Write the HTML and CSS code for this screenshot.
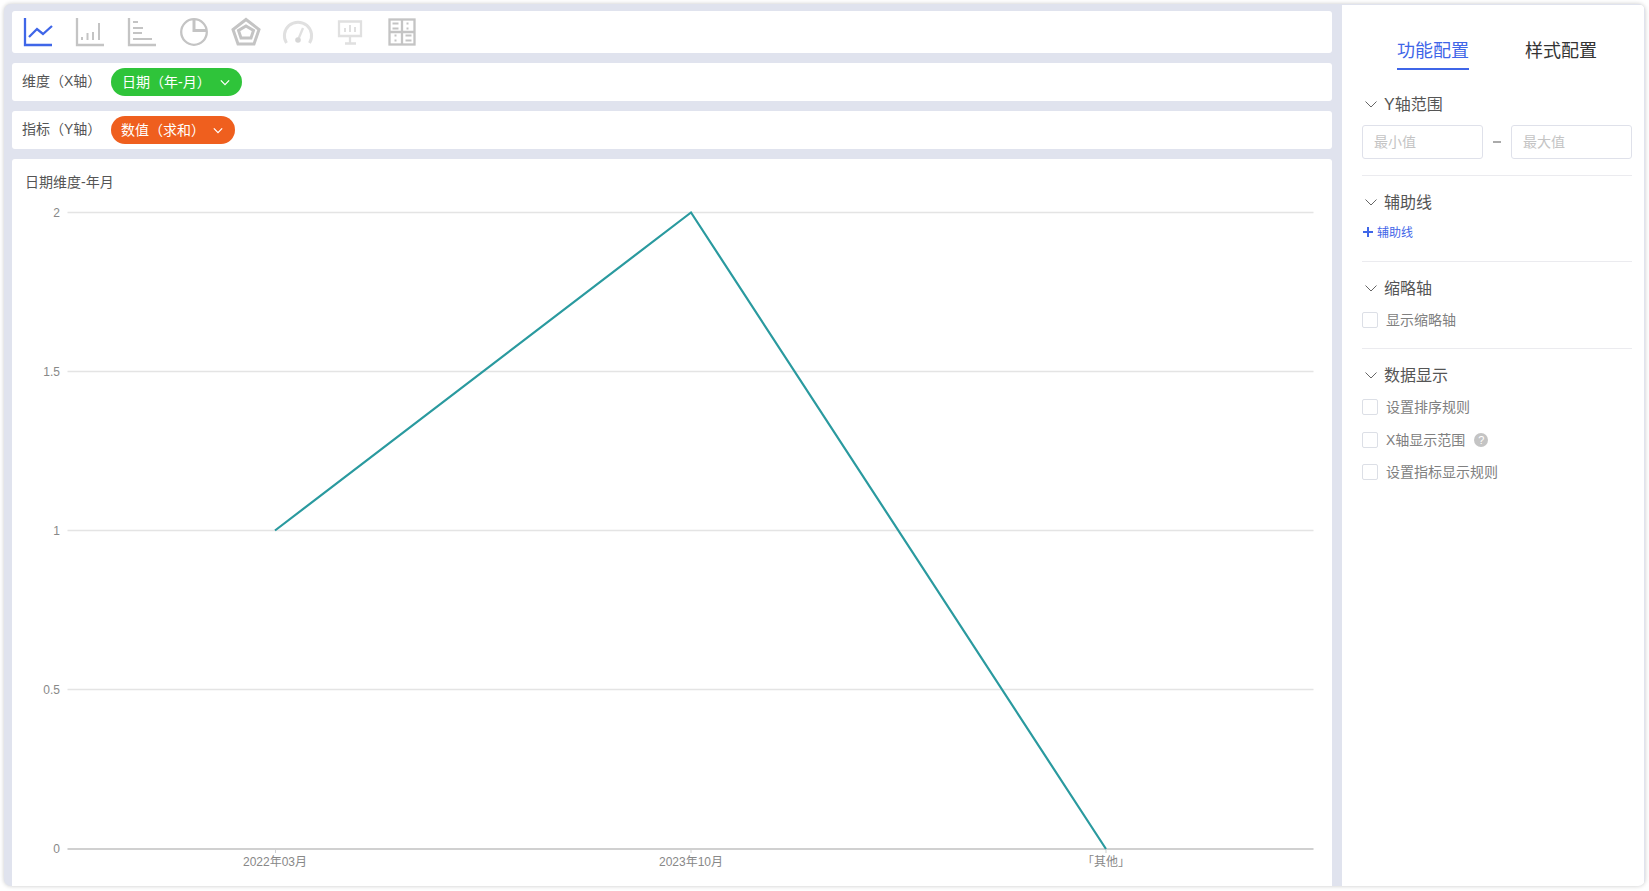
FILE: index.html
```html
<!DOCTYPE html>
<html lang="zh-CN">
<head>
<meta charset="utf-8">
<title>图表配置</title>
<link rel="stylesheet" href="styles.css">
</head>
<body>
<div class="window">
  <main class="main">
    <div class="card toolbar">
      <svg class="ico" viewBox="0 0 28 28"><g class="s-blue"><path d="M1 0V27H28"/><path d="M5 19L13 11L19 16L28 8"/></g></svg>
      <svg class="ico" viewBox="0 0 28 28"><g class="s-gray"><path d="M1 0V27H28"/><path class="thin" d="M6 22V19M11.500 22V15M17 22V14M23 22V5"/></g></svg>
      <svg class="ico" viewBox="0 0 28 28"><g class="s-gray"><path d="M1 0V27H28"/><path class="thin" d="M5 4H10M5 10H15M5 15H14M5 21H24"/></g></svg>
      <svg class="ico" viewBox="0 0 28 28"><g class="s-gray"><circle cx="14" cy="14" r="12.800"/><path class="bold" d="M14 1V12.500H27"/></g></svg>
      <svg class="ico" viewBox="0 0 28 28"><g class="s-gray"><path class="bold" d="M14 1.500L27 11.500L22 26H6L1 11.500Z"/><path class="bold" d="M14 8L21.500 12.500L19 20H9L6.500 12.500Z"/></g></svg>
      <svg class="ico" viewBox="0 0 28 28"><g class="s-light"><path class="bold" d="M2.500 25A13.600 13.600 0 1 1 25.500 25"/><path d="M14 22L19 10"/><circle class="dot" cx="14" cy="22" r="2.800"/></g></svg>
      <svg class="ico" viewBox="0 0 28 28"><g class="s-light"><path d="M3 3.500H25V18H3Z"/><path d="M14 18V25M9 25.500H20"/><path class="thin" d="M9 14V10M14 14V7M19 14V9"/></g></svg>
      <svg class="ico" viewBox="0 0 28 28"><g class="s-gray"><rect x="1.500" y="1.500" width="25" height="25"/><path d="M14 1V27M1 14H27"/><path class="thin" d="M4.500 5.500H10.500M4.500 10.500H10.500M17.500 17.500H23.500M17.500 22.500H23.500M19.500 4.500V6.500M19.500 9.500V11.500M7.500 16.500V18.500M7.500 21.500V23.500"/></g></svg>
    </div>
    <div class="card field">
      <span class="field-label">维度（X轴）</span>
      <span class="pill pill-green"><span class="lbl">日期（年-月）</span><svg class="chev" viewBox="0 0 12 8"><path d="M1 1.500L6 6.500L11 1.500"/></svg></span>
    </div>
    <div class="card field">
      <span class="field-label">指标（Y轴）</span>
      <span class="pill pill-orange"><span class="lbl">数值（求和）</span><svg class="chev" viewBox="0 0 12 8"><path d="M1 1.500L6 6.500L11 1.500"/></svg></span>
    </div>
    <div class="card chart">
      <div class="chart-title">日期维度-年月</div>
      <svg class="plot" viewBox="12 191 1320 695" preserveAspectRatio="none">
        <g class="grid">
          <path d="M67.500 212.500H1313.500"/>
          <path d="M67.500 371.500H1313.500"/>
          <path d="M67.500 530.500H1313.500"/>
          <path d="M67.500 689.500H1313.500"/>
        </g>
        <path class="base" d="M67.500 849H1313.500"/>
        <path class="tick" d="M275.500 849V853M691 849V853M1106 849V853"/>
        <g class="y-labels">
          <text x="60" y="217">2</text>
          <text x="60" y="376">1.5</text>
          <text x="60" y="535">1</text>
          <text x="60" y="694">0.5</text>
          <text x="60" y="853">0</text>
        </g>
        <g class="x-labels">
          <text x="275" y="866">2022年03月</text>
          <text x="691" y="866">2023年10月</text>
          <text x="1106" y="866">「其他」</text>
        </g>
        <path class="series" d="M275 530.500L691 212.500L1106 849"/>
      </svg>
    </div>
  </main>
  <aside class="panel">
    <div class="tabs">
      <span class="tab tab-active">功能配置</span>
      <span class="tab">样式配置</span>
    </div>
    <section class="sec sec-range">
      <div class="sec-head"><svg class="sec-chev" viewBox="0 0 12 7"><path d="M.5 .5L6 6L11.500 .5"/></svg><span class="lbl">Y轴范围</span></div>
      <div class="range">
        <div class="input">最小值</div>
        <span class="dash"></span>
        <div class="input">最大值</div>
      </div>
    </section>
    <section class="sec sec-guide">
      <div class="sec-head"><svg class="sec-chev" viewBox="0 0 12 7"><path d="M.5 .5L6 6L11.500 .5"/></svg><span class="lbl">辅助线</span></div>
      <div class="add"><svg class="plus" viewBox="0 0 10 10"><path d="M5 0V10M0 5H10"/></svg><span class="lbl">辅助线</span></div>
    </section>
    <section class="sec sec-thumb">
      <div class="sec-head"><svg class="sec-chev" viewBox="0 0 12 7"><path d="M.5 .5L6 6L11.500 .5"/></svg><span class="lbl">缩略轴</span></div>
      <label class="check"><span class="box"></span><span class="lbl">显示缩略轴</span></label>
    </section>
    <section class="sec sec-last">
      <div class="sec-head"><svg class="sec-chev" viewBox="0 0 12 7"><path d="M.5 .5L6 6L11.500 .5"/></svg><span class="lbl">数据显示</span></div>
      <label class="check"><span class="box"></span><span class="lbl">设置排序规则</span></label>
      <label class="check"><span class="box"></span><span class="lbl">X轴显示范围</span><span class="help">?</span></label>
      <label class="check"><span class="box"></span><span class="lbl">设置指标显示规则</span></label>
    </section>
  </aside>
</div>
</body>
</html>
```
FILE: styles.css
```css
* { box-sizing: border-box; }
html, body { height: 100%; }
body {
  margin: 0;
  padding: 4px 4px 5px 4px;
  background: #fff;
  font-family: "Liberation Sans", "Noto Sans CJK SC", sans-serif;
  overflow: hidden;
}
.window {
  display: flex;
  height: 100%;
  background: #e0e3ee;
  border-radius: 7px;
  overflow: hidden;
  box-shadow: 0 0 4px rgba(0, 0, 0, .22);
}
.main {
  width: 1338px;
  flex: none;
  display: flex;
  flex-direction: column;
  gap: 10px;
  padding: 7px 10px 0 8px;
}
.card { background: #fff; border-radius: 3px; flex: none; }
.toolbar {
  height: 42px;
  display: flex;
  align-items: flex-start;
  gap: 24px;
  padding: 7px 0 0 12px;
}
.ico { width: 28px; height: 28px; flex: none; overflow: visible; }
.ico g { fill: none; stroke-width: 2.300; }
.ico .thin { stroke-width: 2; }
.ico .bold { stroke-width: 3; }
.s-blue { stroke: #3f66e8; }
.s-gray { stroke: #c4c4c4; }
.s-light { stroke: #e0e0e0; }
.ico .dot { fill: #d6d6d6; stroke: none; }
.lbl { margin-bottom: 2px; }
.field {
  height: 38px;
  display: flex;
  align-items: center;
  padding-left: 10px;
}
.field-label { width: 89px; font-size: 14px; line-height: 18px; padding-bottom: 3px; color: #555; flex: none; }
.pill {
  height: 28px;
  display: flex;
  align-items: center;
  border-radius: 14px;
  color: #fff;
  font-size: 14px;
  flex: none;
}
.pill .lbl { margin-bottom: 3px; }
.pill-green { width: 131px; background: #2fc43a; padding-left: 11px; }
.pill-orange { width: 124px; background: #ef5f1e; padding-left: 10px; }
.chev { width: 10px; height: 7px; margin-left: 9px; fill: none; stroke: #fff; stroke-width: 1.500; }
.pill-orange .chev { margin-left: 8px; }
.chart { flex: 1; min-height: 0; display: flex; flex-direction: column; border-radius: 3px 3px 0 0; }
.chart-title { height: 32px; padding: 14px 0 0 13px; font-size: 14px; line-height: 18px; color: #555; flex: none; }
.plot { width: 1320px; height: 695px; display: block; flex: none; }
.grid path { stroke: #e4e4e4; stroke-width: 1.400; fill: none; }
.base { stroke: #d0d0d0; stroke-width: 2; fill: none; }
.tick { stroke: #cfcfcf; stroke-width: 1; fill: none; }
.y-labels text { font-size: 12px; fill: #888; text-anchor: end; }
.x-labels text { font-size: 12px; fill: #888; text-anchor: middle; }
.series { fill: none; stroke: #2a9a9f; stroke-width: 2.200; }
.panel {
  width: 302px;
  flex: none;
  margin-top: 1px;
  background: #fff;
  padding: 0 12px 0 20px;
}
.tabs { display: flex; height: 65px; padding: 33px 0 0 35px; gap: 56px; }
.tab {
  font-size: 18px;
  line-height: 26px;
  height: 32px;
  color: #333;
  flex: none;
  width: 72px;
  white-space: nowrap;
}
.tab-active { color: #3f66e8; border-bottom: 2px solid #3f66e8; }
.sec { border-bottom: 1px solid #ebebef; }
.sec-range { height: 106px; padding-top: 23px; }
.sec-guide { height: 86px; padding-top: 15px; }
.sec-thumb { height: 87px; padding-top: 15px; }
.sec-last { border-bottom: 0; padding-top: 15px; }
.sec-head {
  display: flex;
  align-items: center;
  height: 22px;
  font-size: 16px;
  color: #555;
}
.sec-chev { width: 12px; height: 7px; margin: 0 7px 0 3px; fill: none; stroke: #666; stroke-width: 1; flex: none; }
.range { display: flex; align-items: center; margin-top: 10px; }
.input {
  width: 121px;
  height: 34px;
  border: 1px solid #dfe1ea;
  border-radius: 3px;
  font-size: 14px;
  line-height: 32px;
  color: #c4c4c4;
  padding-left: 11px;
  flex: none;
}
.dash { width: 8px; height: 1.500px; background: #aaa; margin: 0 10px; flex: none; }
.add { display: flex; align-items: center; margin-top: 11px; height: 16px; font-size: 12px; color: #3f66e8; }
.plus { width: 10px; height: 10px; margin: 0 4px 0 1px; fill: none; stroke: #3f66e8; stroke-width: 2; flex: none; }
.check {
  display: flex;
  align-items: center;
  height: 32.500px;
  font-size: 14px;
  color: #808080;
}
.sec-head + .check { margin-top: 5px; }
.box { width: 16px; height: 16px; border: 1px solid #dcdfe6; border-radius: 2px; margin-right: 8px; flex: none; }
.help {
  width: 14px;
  height: 14px;
  border-radius: 50%;
  background: #c4c4c4;
  color: #fff;
  font-size: 11px;
  line-height: 14px;
  text-align: center;
  margin-left: 9px;
  flex: none;
}
```
